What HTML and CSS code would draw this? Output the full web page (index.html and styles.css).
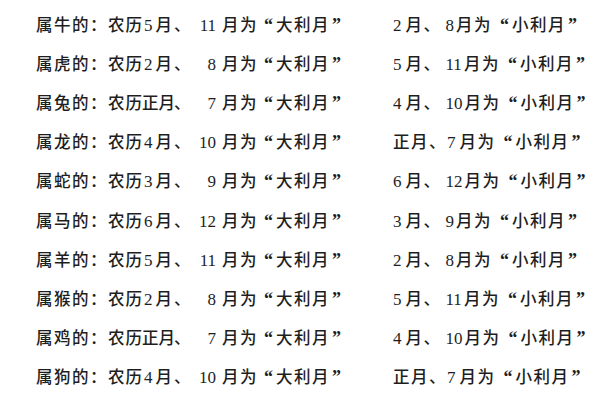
FILE: index.html
```html
<!DOCTYPE html>
<html lang="zh-CN">
<head>
<meta charset="utf-8">
<title>生肖大利月小利月</title>
<link rel="stylesheet" href="styles.css">
</head>
<body>
<div class="sheet">
  <div class="row">
    <div class="l"><span class="lab">属牛的：</span><span class="nl">农历</span><span class="m1"><span class="n">5</span>月</span><span class="dun">、</span><span class="m2">11</span><span class="tail">月为</span><span class="ql">“</span><span class="big">大利月</span><span class="qr">”</span></div>
    <div class="r"><span class="n">2</span>月、<span class="n">8</span>月为<span class="ql">“</span>小利月<span class="qr">”</span></div>
  </div>
  <div class="row">
    <div class="l"><span class="lab">属虎的：</span><span class="nl">农历</span><span class="m1"><span class="n">2</span>月</span><span class="dun">、</span><span class="m2">8</span><span class="tail">月为</span><span class="ql">“</span><span class="big">大利月</span><span class="qr">”</span></div>
    <div class="r"><span class="n">5</span>月、<span class="n">11</span>月为<span class="ql">“</span>小利月<span class="qr">”</span></div>
  </div>
  <div class="row">
    <div class="l"><span class="lab">属兔的：</span><span class="nl">农历</span><span class="m1">正月</span><span class="dun">、</span><span class="m2">7</span><span class="tail">月为</span><span class="ql">“</span><span class="big">大利月</span><span class="qr">”</span></div>
    <div class="r"><span class="n">4</span>月、<span class="n">10</span>月为<span class="ql">“</span>小利月<span class="qr">”</span></div>
  </div>
  <div class="row">
    <div class="l"><span class="lab">属龙的：</span><span class="nl">农历</span><span class="m1"><span class="n">4</span>月</span><span class="dun">、</span><span class="m2">10</span><span class="tail">月为</span><span class="ql">“</span><span class="big">大利月</span><span class="qr">”</span></div>
    <div class="r">正月、<span class="n">7</span>月为<span class="ql">“</span>小利月<span class="qr">”</span></div>
  </div>
  <div class="row">
    <div class="l"><span class="lab">属蛇的：</span><span class="nl">农历</span><span class="m1"><span class="n">3</span>月</span><span class="dun">、</span><span class="m2">9</span><span class="tail">月为</span><span class="ql">“</span><span class="big">大利月</span><span class="qr">”</span></div>
    <div class="r"><span class="n">6</span>月、<span class="n">12</span>月为<span class="ql">“</span>小利月<span class="qr">”</span></div>
  </div>
  <div class="row">
    <div class="l"><span class="lab">属马的：</span><span class="nl">农历</span><span class="m1"><span class="n">6</span>月</span><span class="dun">、</span><span class="m2">12</span><span class="tail">月为</span><span class="ql">“</span><span class="big">大利月</span><span class="qr">”</span></div>
    <div class="r"><span class="n">3</span>月、<span class="n">9</span>月为<span class="ql">“</span>小利月<span class="qr">”</span></div>
  </div>
  <div class="row">
    <div class="l"><span class="lab">属羊的：</span><span class="nl">农历</span><span class="m1"><span class="n">5</span>月</span><span class="dun">、</span><span class="m2">11</span><span class="tail">月为</span><span class="ql">“</span><span class="big">大利月</span><span class="qr">”</span></div>
    <div class="r"><span class="n">2</span>月、<span class="n">8</span>月为<span class="ql">“</span>小利月<span class="qr">”</span></div>
  </div>
  <div class="row">
    <div class="l"><span class="lab">属猴的：</span><span class="nl">农历</span><span class="m1"><span class="n">2</span>月</span><span class="dun">、</span><span class="m2">8</span><span class="tail">月为</span><span class="ql">“</span><span class="big">大利月</span><span class="qr">”</span></div>
    <div class="r"><span class="n">5</span>月、<span class="n">11</span>月为<span class="ql">“</span>小利月<span class="qr">”</span></div>
  </div>
  <div class="row">
    <div class="l"><span class="lab">属鸡的：</span><span class="nl">农历</span><span class="m1">正月</span><span class="dun">、</span><span class="m2">7</span><span class="tail">月为</span><span class="ql">“</span><span class="big">大利月</span><span class="qr">”</span></div>
    <div class="r"><span class="n">4</span>月、<span class="n">10</span>月为<span class="ql">“</span>小利月<span class="qr">”</span></div>
  </div>
  <div class="row">
    <div class="l"><span class="lab">属狗的：</span><span class="nl">农历</span><span class="m1"><span class="n">4</span>月</span><span class="dun">、</span><span class="m2">10</span><span class="tail">月为</span><span class="ql">“</span><span class="big">大利月</span><span class="qr">”</span></div>
    <div class="r">正月、<span class="n">7</span>月为<span class="ql">“</span>小利月<span class="qr">”</span></div>
  </div>
</div>
</body>
</html>
```

FILE: styles.css
```css
html, body {
  margin: 0;
  padding: 0;
  background: #ffffff;
}

body {
  font-family: "Noto Sans CJK SC", "Noto Sans", sans-serif;
  font-size: 16.5px;
  font-weight: 500;
  color: #1e1e1e;
}

.sheet {
  padding: 5px 0 0 36px;
}

.row {
  display: grid;
  grid-template-columns: 357px auto;
  height: 39.2px;
  align-items: center;
}

.l, .r {
  display: flex;
  align-items: baseline;
  white-space: nowrap;
  line-height: 20px;
}

.l > span {
  flex: none;
}

.lab {
  width: 72px;
  letter-spacing: 1.5px;
}

.nl {
  width: 34px;
  letter-spacing: 1px;
}

.m1 {
  width: 32px;
}

.n {
  font-family: "Liberation Serif", "Times New Roman", serif;
  font-size: 17px;
  font-weight: 400;
  letter-spacing: 0;
}

.m1 .n {
  margin-left: 2px;
  margin-right: 3px;
}

.dun {
  width: 16px;
}

.m2 {
  width: 26px;
  text-align: right;
  font-family: "Liberation Serif", "Times New Roman", serif;
  font-size: 17px;
  font-weight: 400;
}

.tail {
  width: 36px;
  margin-left: 6px;
  letter-spacing: 1.5px;
}

.ql, .qr {
  width: 18px;
  font-family: "Liberation Serif", "Times New Roman", serif;
  font-size: 18px;
  font-weight: 700;
  letter-spacing: 0;
}

.ql {
  text-align: right;
  padding-right: 3px;
  box-sizing: border-box;
}

.qr {
  text-align: left;
  padding-left: 2px;
  box-sizing: border-box;
}

.big {
  width: 54px;
  letter-spacing: 1.5px;
}

.r {
  letter-spacing: 1.5px;
}

.r .n {
  margin: 0 2px 0 4px;
}

.r .n:first-child {
  margin-left: 0;
  margin-right: 4px;
}

.r .ql, .r .qr {
  flex: none;
}

.r .ql {
  margin-left: 2px;
}
```
